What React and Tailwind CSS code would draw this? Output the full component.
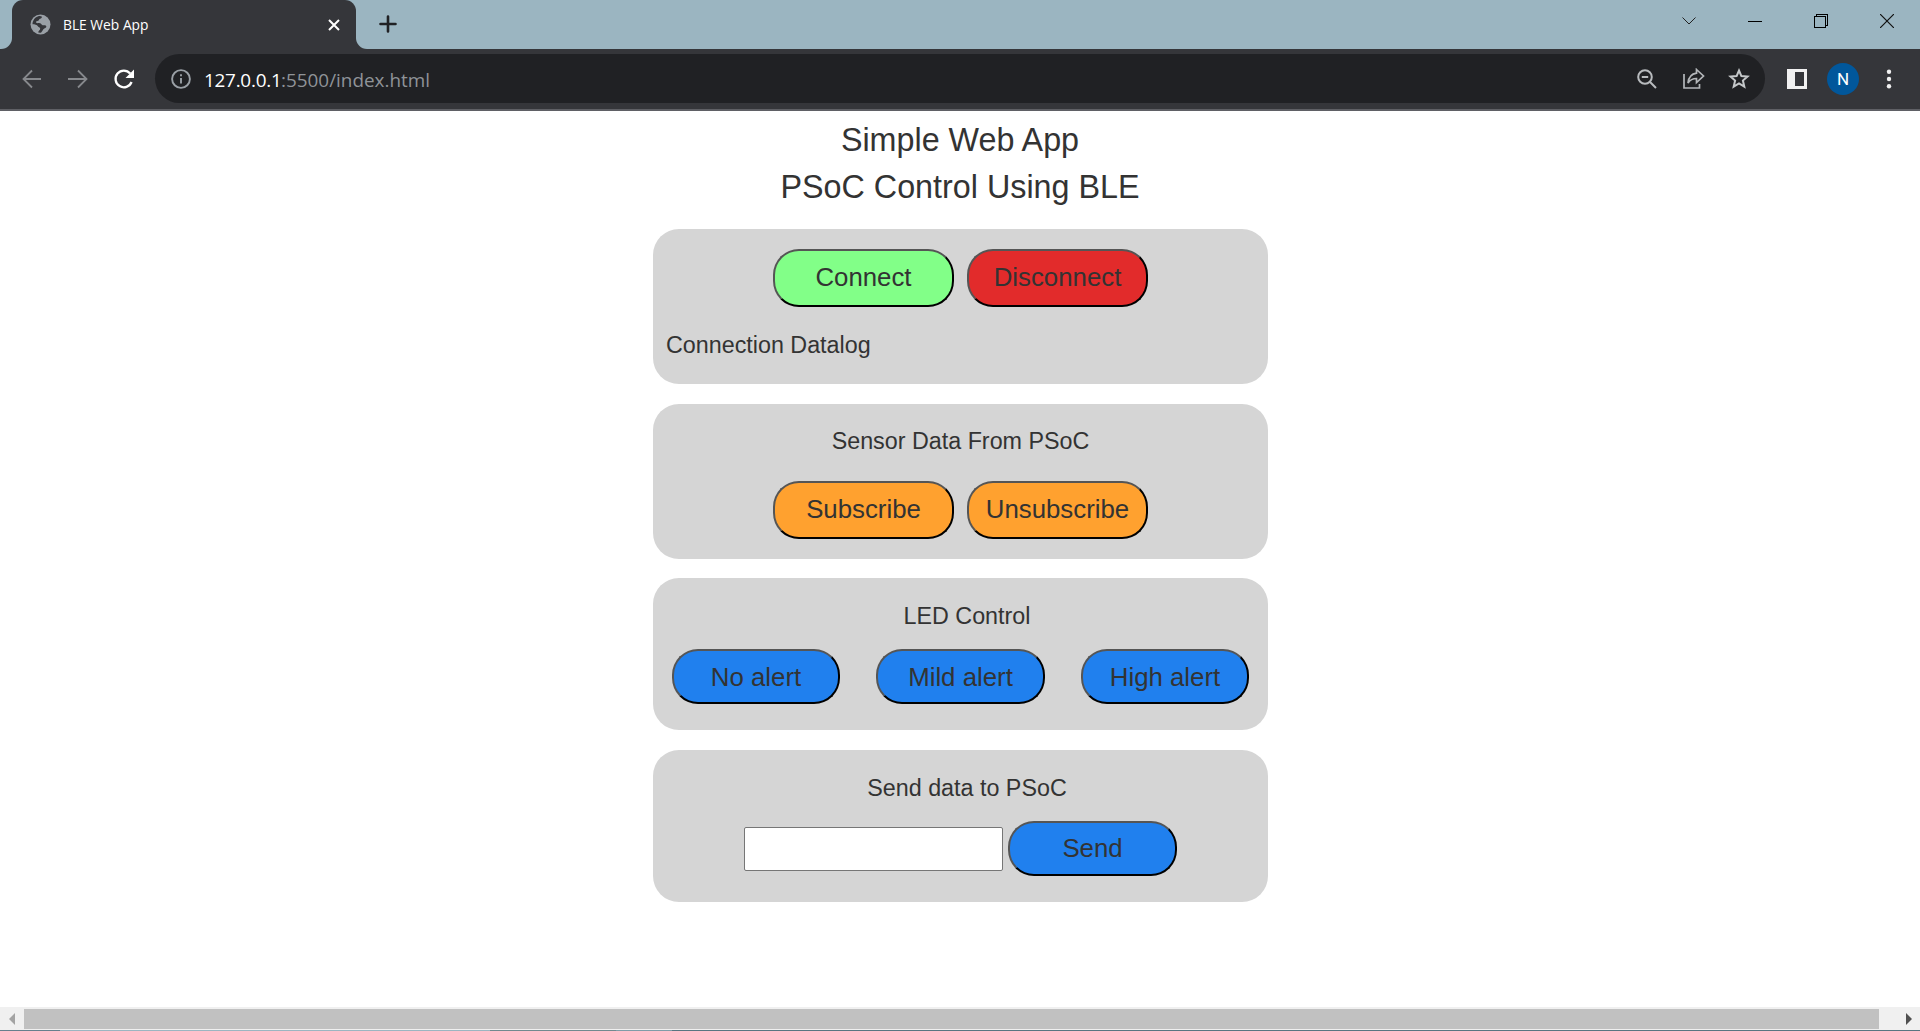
import React from "react";

const ARIAL = "font-['Liberation_Sans',Arial,sans-serif]";

function Pill({ className, children }) {
  return (
    <button
      className={`flex shrink-0 items-center justify-center rounded-[26px] border-2 border-t-[#555] border-l-[#555] border-r-black border-b-black pl-px text-[25.8px] leading-none text-[#333] ${className}`}
    >
      {children}
    </button>
  );
}

function Card({ className, children }) {
  return <section className={`w-[615px] rounded-[26px] bg-[#d5d5d5] ${className}`}>{children}</section>;
}

function TabStrip() {
  return (
    <div className="flex h-[49px] bg-[#9bb5c1]">
      <div className="flex h-full w-3 items-end bg-[#35363a]">
        <div className="h-full w-full rounded-br-[11px] bg-[#9bb5c1]" />
      </div>
      <div className="flex w-[344px] items-center bg-[#9bb5c1]">
        <div className="flex h-full w-full items-center rounded-t-[11px] bg-[#35363a] pr-[17px] pl-[18px]">
          <svg width="21" height="21" viewBox="0 0 21 21" className="shrink-0">
            <circle cx="10.5" cy="10.5" r="10" fill="#9aa0a6" />
            <path
              d="M8.3 2.2c1.8-.3 3 .1 3.7.5-.2 1.100-.7 1.700-1.900 2C9 5 9.100 6.200 8.300 6.700 7.200 7.100 6 7 6 8.100c0 1.300 1.300 1 2.900 1 2.300 0 2.600 1.800 3.700 2.100 1.300.3 3-.5 3.600.8.500 1.300-.4 2-1.900 2.600-1.600.7-1.500 2.700-3.100 3.800-1 .5-2.500.2-3.200-.1.100-1.800 1.900-2 1.900-3.400 0-1.800-2.600-1.300-3.200-2.700-.5-1.400-2.700-1.800-4.200-2 .1-4 2.700-7.200 5.800-8z"
              fill="#35363a"
            />
            <path d="M2.500 10.400c2 .2 4.700.1 5.200 1.500.5 1.300 2.300 1 2.500 2.700.1 1.500-1.800 2-2.100 3.700-3.200-.8-5.600-4-5.600-7.900z" fill="#9aa0a6" />
          </svg>
          <span className="ml-[12px] pt-px font-['Open_Sans','Noto_Sans',sans-serif] text-[13.8px] leading-none whitespace-nowrap text-white">
            BLE Web App
          </span>
          <svg width="12" height="12" viewBox="0 0 12 12" className="-mr-px ml-auto" stroke="#fff" strokeWidth="2">
            <path d="M1 1l10 10M11 1L1 11" />
          </svg>
        </div>
      </div>
      <div className="h-full w-3 bg-[#35363a]">
        <div className="h-full w-full rounded-bl-[11px] bg-[#9bb5c1]" />
      </div>
      <svg width="18" height="18" viewBox="0 0 18 18" className="mt-[15px] ml-[11px]" stroke="#202124" strokeWidth="2.600" strokeLinecap="round">
        <path d="M9 1.500v15M1.500 9h15" />
      </svg>
      <div className="ml-auto flex h-[42px] items-center">
        <svg width="16" height="10" viewBox="0 0 16 10" className="mr-[51px]" fill="none" stroke="#222" strokeWidth="1">
          <path d="M1.500 1.500L8 8l6.500-6.500" />
        </svg>
        <svg width="14" height="14" viewBox="0 0 14 14" className="mr-[52px]" shapeRendering="crispEdges">
          <rect x="0" y="7" width="14" height="1" />
        </svg>
        <svg width="14" height="14" viewBox="0 0 14 14" className="mr-[52px]" fill="none" stroke="#000" shapeRendering="crispEdges">
          <path d="M.5 2.500h11v11H.5zM2.500 2.500v-2h11v11h-2" />
        </svg>
        <svg width="14" height="14" viewBox="0 0 14 14" className="mr-[26px]" stroke="#111" strokeWidth="1.200">
          <path d="M0 0l14 14M14 0L0 14" />
        </svg>
      </div>
    </div>
  );
}

function Toolbar() {
  return (
    <div className="flex h-[62px] items-center border-b-2 border-[#5f6065] bg-[#35363a]">
      <svg width="20" height="20" viewBox="0 0 20 20" className="ml-[22px]" fill="none" stroke="#87898d" strokeWidth="1.800">
        <path d="M19 10H2M10 1.500L1.500 10l8.500 8.500" />
      </svg>
      <svg width="20" height="20" viewBox="0 0 20 20" className="ml-[26px]" fill="none" stroke="#87898d" strokeWidth="1.800">
        <path d="M0 10h18M10 1.500l8.500 8.500-8.500 8.500" />
      </svg>
      <svg width="22" height="22" viewBox="0 0 22 22" className="ml-[25px]" fill="none">
        <path d="M17.200 5.600A8.300 8.300 0 1 0 18.600 14" stroke="#fff" strokeWidth="2.300" />
        <path d="M21 1.500v8.500h-8.500z" fill="#fff" />
      </svg>
      <div className="mb-[1px] ml-[20px] flex h-[49px] w-[1610px] items-center rounded-full bg-[#202124] pl-[16px]">
        <svg width="20" height="20" viewBox="0 0 20 20" fill="none" stroke="#9aa0a6" strokeWidth="1.900">
          <circle cx="10" cy="10" r="8.900" />
          <path d="M10 9v5.500M10 5.200v2" />
        </svg>
        <span className="ml-[13px] flex pt-[3px] font-['Open_Sans','Noto_Sans',sans-serif] text-[18.900px] leading-none whitespace-nowrap text-[#8f9398]">
          <span className="w-[77px] tracking-[-0.25px] text-white">127.0.0.1</span>
          <span>:5500/index.html</span>
        </span>
        <svg width="20" height="20" viewBox="0 0 20 20" className="ml-auto" fill="none" stroke="#b8bbbe" strokeWidth="2">
          <circle cx="8" cy="8" r="6.800" />
          <path d="M4.800 8h6.400M12.800 12.800l6.200 6.200" />
        </svg>
        <svg width="22" height="21" viewBox="0 0 22 21" className="ml-[26px]" fill="none" stroke="#b4b7ba" strokeWidth="1.700">
          <path d="M1 6v14h15.500v-4" />
          <path d="M13.500 1.500L20.500 8l-7 6.500v-4C9.500 10.500 7 12 5 15c.5-5 3-9 8.500-9.800z" />
        </svg>
        <svg width="22" height="21" viewBox="0 0 22 21" className="mr-[15px] ml-[23px]" fill="none" stroke="#c4c7c9" strokeWidth="2">
          <path d="M11 2.500l2.400 5.600 6.100.5-4.600 4 1.400 6-5.300-3.200-5.300 3.200 1.400-6-4.600-4 6.100-.5z" />
        </svg>
      </div>
      <svg width="20" height="20" viewBox="0 0 20 20" className="ml-[22px]">
        <rect width="20" height="20" fill="#f1f1f1" />
        <rect x="8" y="3" width="9" height="14" fill="#35363a" />
      </svg>
      <div className="ml-[20px] flex size-8 items-center justify-center rounded-full bg-[#01579b] font-[Roboto,sans-serif] text-[17px] leading-none text-white">
        N
      </div>
      <svg width="6" height="20" viewBox="0 0 6 20" className="ml-[27px]" fill="#f1f1f1">
        <circle cx="3" cy="2.800" r="2.200" />
        <circle cx="3" cy="10" r="2.200" />
        <circle cx="3" cy="17.200" r="2.200" />
      </svg>
    </div>
  );
}

function Scrollbar() {
  return (
    <footer>
      <div className="flex h-[23px] items-center bg-[#f0f0f0]">
        <svg width="24" height="12" viewBox="0 0 24 12" fill="#a3a3a3">
          <path d="M15 0v12L9 6z" />
        </svg>
        <div className="h-5 w-[1855px] bg-[#c1c1c1]" />
        <svg width="41" height="12" viewBox="0 0 41 12" fill="#505050">
          <path d="M27 0v12l6-6z" />
        </svg>
      </div>
      <div className="flex h-px bg-[#587581]">
        <div className="w-[60px] bg-[#667f8d]" />
        <div className="w-[430px] bg-[#9bb5c1]" />
        <div className="w-[126px] bg-[#71898f]" />
        <div className="w-[56px] bg-[#7f9ca8]" />
      </div>
    </footer>
  );
}

export default function App() {
  return (
    <div className="flex h-[1031px] w-[1920px] flex-col overflow-hidden bg-white">
      <header>
        <TabStrip />
        <Toolbar />
      </header>
      <main className={`flex flex-1 flex-col items-center pt-[6px] text-[#333] ${ARIAL}`}>
        <h1 className="text-center text-[32.300px] leading-[47px]">
          Simple Web App
          <br />
          PSoC Control Using BLE
        </h1>
        <Card className="mt-[18px] h-[155px] pt-[20px]">
          <div className="flex justify-center gap-[13px]">
            <Pill className="h-[58px] w-[181px] bg-[#82ff88]">Connect</Pill>
            <Pill className="h-[58px] w-[181px] bg-[#e22b2b]">Disconnect</Pill>
          </div>
          <p className="mt-[22px] pl-[13.500px] text-[23.300px] leading-8">Connection Datalog</p>
        </Card>
        <Card className="mt-[20px] h-[155px] pt-[21px]">
          <p className="pl-px text-center text-[23.300px] leading-8">Sensor Data From PSoC</p>
          <div className="mt-[24px] flex justify-center gap-[13px]">
            <Pill className="h-[58px] w-[181px] bg-[#ffa12f]">Subscribe</Pill>
            <Pill className="h-[58px] w-[181px] bg-[#ffa12f]">Unsubscribe</Pill>
          </div>
        </Card>
        <Card className="mt-[19px] h-[152px] pt-[22px]">
          <p className="pl-[14px] text-center text-[23.300px] leading-8">LED Control</p>
          <div className="mt-[17px] flex justify-center gap-[36px]">
            <Pill className="h-[55px] w-[168px] bg-[#2080ee] pt-[2px]">No alert</Pill>
            <Pill className="h-[55px] w-[169px] bg-[#2080ee] pt-[2px]">Mild alert</Pill>
            <Pill className="h-[55px] w-[168px] bg-[#2080ee] pt-[2px]">High alert</Pill>
          </div>
        </Card>
        <Card className="mt-[20px] h-[152px] pt-[22px]">
          <p className="pl-[14px] text-center text-[23.300px] leading-8">Send data to PSoC</p>
          <div className="mt-[17px] flex items-center justify-center gap-[5px]">
            <input className="h-[44px] w-[259px] rounded-[2px] border border-[#767676] bg-white px-2 text-[23px]" />
            <Pill className="h-[55px] w-[169px] bg-[#2080ee]">Send</Pill>
          </div>
        </Card>
      </main>
      <Scrollbar />
    </div>
  );
}
